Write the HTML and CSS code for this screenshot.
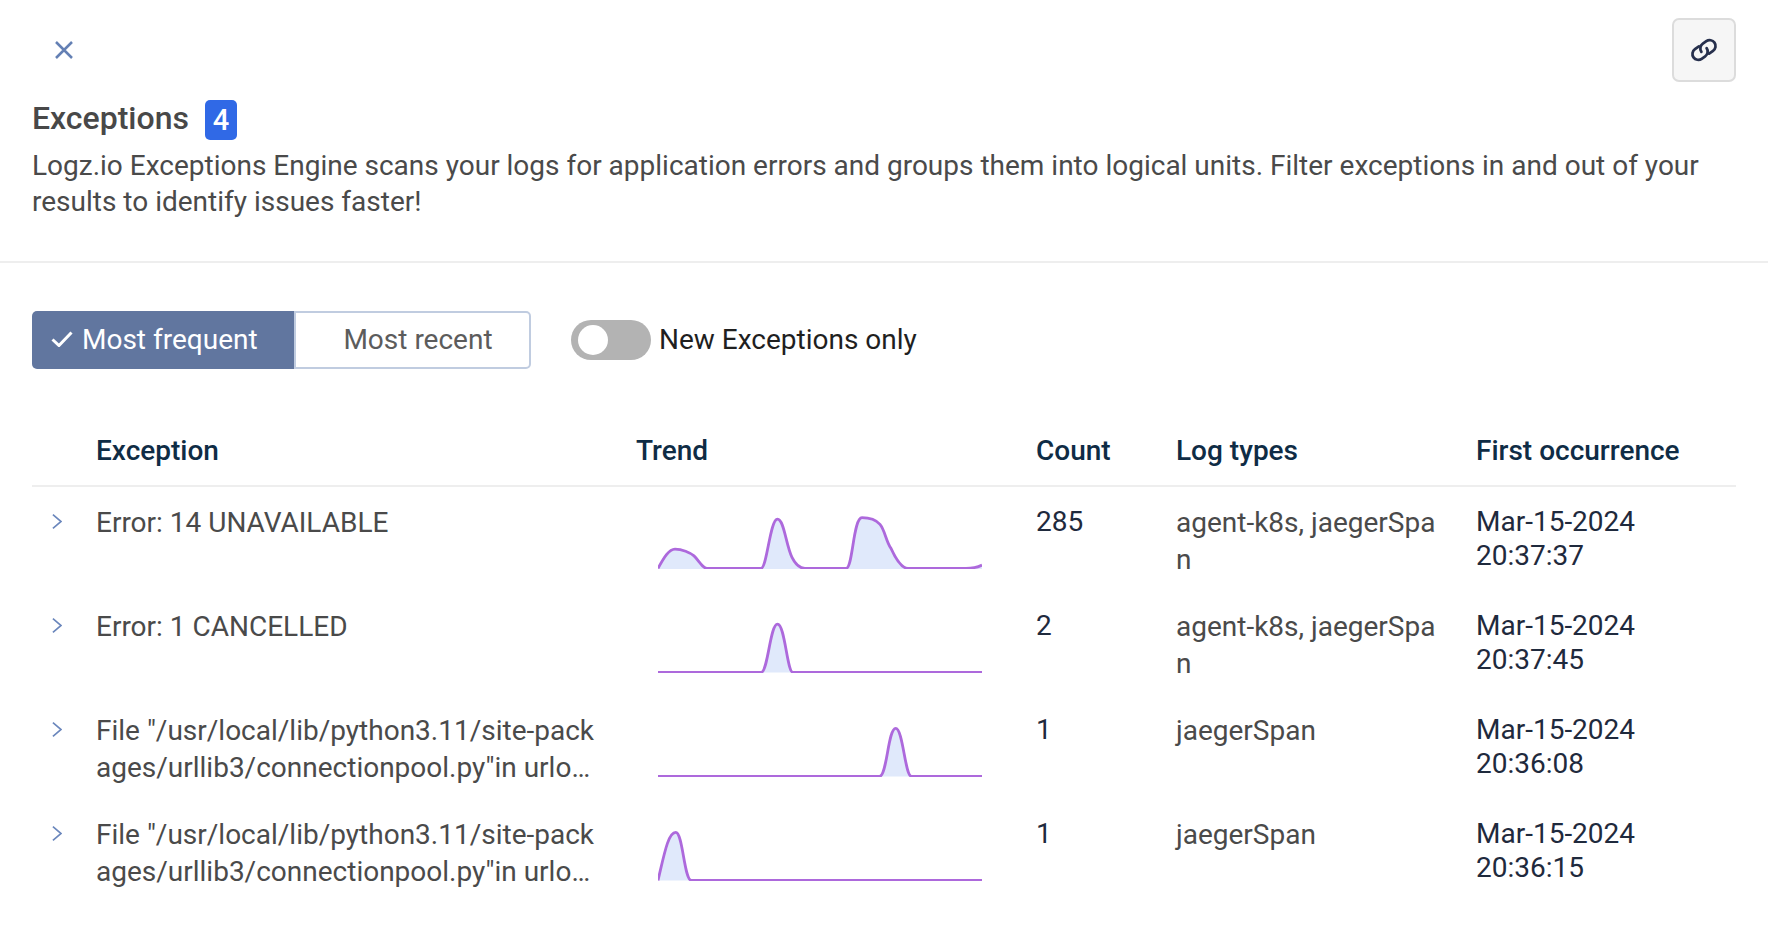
FILE: index.html
```html
<!DOCTYPE html>
<html lang="en">
<head>
<meta charset="utf-8">
<title>Exceptions</title>
<link rel="stylesheet" href="styles.css">
</head>
<body>
<header class="head">
  <div class="top">
    <button class="close" aria-label="Close">
      <svg width="18" height="18" viewBox="0 0 18 18"><path d="M1 1 17 17M17 1 1 17"/></svg>
    </button>
    <button class="link" aria-label="Copy link">
      <svg width="32" height="26" viewBox="0 0 30 24"><g transform="rotate(-35 15 12)"><path d="M13 6.500H8.500a5.500 5.500 0 0 0 0 11h4a5.500 5.500 0 0 0 5.500-5.500"/><path d="M17 17.500h4.500a5.500 5.500 0 0 0 0-11h-4a5.500 5.500 0 0 0-5.500 5.500"/></g></svg>
    </button>
  </div>
  <div class="title"><h1>Exceptions</h1><span class="badge">4</span></div>
  <p class="desc">Logz.io Exceptions Engine scans your logs for application errors and groups them into logical units. Filter exceptions in and out of your results to identify issues faster!</p>
</header>
<section class="controls">
  <div class="seg">
    <button class="seg-on"><svg width="22" height="16" viewBox="0 0 22 16"><path d="M1.500 8.500 8 14.500 20.500 1.500"/></svg>Most frequent</button>
    <button class="seg-off">Most recent</button>
  </div>
  <span class="toggle"><span class="knob"></span></span>
  <span class="toggle-label">New Exceptions only</span>
</section>
<section class="table">
  <div class="row row-head">
    <div></div><div>Exception</div><div>Trend</div><div>Count</div><div>Log types</div><div>First occurrence</div>
  </div>
  <div class="row">
    <div class="chev"><svg width="11" height="17" viewBox="0 0 11 17"><path d="M1 1 10 8.500 1 16"/></svg></div>
    <div class="exc">Error: 14 UNAVAILABLE</div>
    <div class="trend"><svg width="324" height="56" viewBox="0 0 324 56"><path class="fill" d="M0 55C6 44 11 35.700 17 35.700 24 35.700 32 39 36 42.500 41 47 44 55 49 55L103 55C109 55 112 5.700 119.500 5.700 126 5.700 128 32 134 44 138 52 142 55 147 55L188 55C195 55 195 4.300 204 4.300 211 4.300 218 6.500 222 11 227 17 228 28 233 35 238 46 244 55 250 55L308 55C315 55 319 54 324 51.700V56H0Z"/><path class="line" d="M0 55C6 44 11 35.700 17 35.700 24 35.700 32 39 36 42.500 41 47 44 55 49 55L103 55C109 55 112 5.700 119.500 5.700 126 5.700 128 32 134 44 138 52 142 55 147 55L188 55C195 55 195 4.300 204 4.300 211 4.300 218 6.500 222 11 227 17 228 28 233 35 238 46 244 55 250 55L308 55C315 55 319 54 324 51.700"/></svg></div>
    <div class="date">285</div>
    <div class="logs">agent-k8s, jaegerSpan</div>
    <div class="date">Mar-15-2024<br>20:37:37</div>
  </div>
  <div class="row">
    <div class="chev"><svg width="11" height="17" viewBox="0 0 11 17"><path d="M1 1 10 8.500 1 16"/></svg></div>
    <div class="exc">Error: 1 CANCELLED</div>
    <div class="trend"><svg width="324" height="56" viewBox="0 0 324 56"><path class="fill" d="M103 55C110 55 112 6.700 119.500 6.700 127 6.700 129 55 135 55Z"/><path class="line" d="M0 55H103C110 55 112 6.700 119.500 6.700 127 6.700 129 55 135 55H324"/></svg></div>
    <div class="date">2</div>
    <div class="logs">agent-k8s, jaegerSpan</div>
    <div class="date">Mar-15-2024<br>20:37:45</div>
  </div>
  <div class="row">
    <div class="chev"><svg width="11" height="17" viewBox="0 0 11 17"><path d="M1 1 10 8.500 1 16"/></svg></div>
    <div class="exc">File "/usr/local/lib/python3.11/site-packages/urllib3/connectionpool.py"in urlopen raise SSLError(e)</div>
    <div class="trend"><svg width="324" height="56" viewBox="0 0 324 56"><path class="fill" d="M221.500 55C229 55 230 7 237.700 7 245 7 247 55 253.500 55Z"/><path class="line" d="M0 55H221.500C229 55 230 7 237.700 7 245 7 247 55 253.500 55H324"/></svg></div>
    <div class="date">1</div>
    <div class="logs">jaegerSpan</div>
    <div class="date">Mar-15-2024<br>20:36:08</div>
  </div>
  <div class="row">
    <div class="chev"><svg width="11" height="17" viewBox="0 0 11 17"><path d="M1 1 10 8.500 1 16"/></svg></div>
    <div class="exc">File "/usr/local/lib/python3.11/site-packages/urllib3/connectionpool.py"in urlopen raise SSLError(e)</div>
    <div class="trend"><svg width="324" height="56" viewBox="0 0 324 56"><path class="fill" d="M0 55C6 30 10 7 17.700 7 25 7 26 55 33.500 55Z"/><path class="line" d="M0 55C6 30 10 7 17.700 7 25 7 26 55 33.500 55H324"/></svg></div>
    <div class="date">1</div>
    <div class="logs">jaegerSpan</div>
    <div class="date">Mar-15-2024<br>20:36:15</div>
  </div>
</section>
</body>
</html>
```
FILE: styles.css
```css
* { box-sizing: border-box; }
html, body { margin: 0; background: #fff; }
body { font-family: Roboto, "Liberation Sans", sans-serif; font-size: 28px; color: #4a4a4a; width: 1768px; height: 930px; overflow: hidden; }
button { font: inherit; cursor: pointer; }

.head { padding: 18px 32px 41px; border-bottom: 2px solid #eeeeee; }
.top { display: flex; justify-content: space-between; align-items: center; }
.close { background: none; border: 0; padding: 0; margin-left: 23px; display: flex; }
.close path { fill: none; stroke: #6480b4; stroke-width: 2.5; }
.link { width: 64px; height: 64px; background: #f6f6f6; border: 2px solid #dcdcdc; border-radius: 7px; display: flex; align-items: center; justify-content: center; padding: 0; }
.link path { fill: none; stroke: #27304d; stroke-width: 2.6; stroke-linecap: round; }

.title { display: flex; align-items: center; gap: 16px; margin-top: 18px; height: 40px; }
h1 { margin: 0 0 4px; font-size: 32px; font-weight: 500; color: #484848; }
.badge { width: 32px; height: 40px; background: #3069e6; color: #fff; border-radius: 5px; display: flex; align-items: center; justify-content: center; font-size: 29px; font-weight: 500; }
.desc { margin: 8px 0 0; line-height: 36px; }

.controls { display: flex; align-items: center; padding: 48px 32px 0; }
.seg { display: flex; height: 58px; }
.seg button { height: 58px; display: flex; align-items: center; padding-bottom: 2px; }
.seg-on { width: 262px; background: #61769f; color: #fff; border: 0; border-radius: 5px 0 0 5px; padding: 0 0 0 19px; gap: 9px; }
.seg-on path { fill: none; stroke: #fff; stroke-width: 3; }
.seg-off { width: 237px; background: #fff; color: #5c5c5c; border: 2px solid #c0cce0; border-radius: 0 5px 5px 0; justify-content: center; padding: 0 0 0 11px; }
.toggle { width: 80px; height: 40px; margin-left: 40px; border-radius: 20px; background: #b3b3b3; position: relative; }
.knob { position: absolute; left: 7px; top: 5px; width: 30px; height: 30px; border-radius: 50%; background: #fff; }
.toggle-label { margin-left: 8px; color: #1f1f1f; padding-bottom: 2px; }

.table { margin: 48px 32px 0; }
.row { display: grid; grid-template-columns: 64px 540px 400px 140px 300px 260px; height: 104px; padding-top: 17px; line-height: 37px; }
.row-head { height: 70px; padding-top: 15px; border-bottom: 2px solid #eeeeee; color: #0f2c45; font-weight: 500; }
.chev { padding: 9px 0 0 20px; line-height: 0; height: 37px; }
.chev svg { display: block; width: 10px; }
.chev path { fill: none; stroke: #6a86bc; stroke-width: 1.8; }
.exc { width: 505px; word-break: break-all; display: -webkit-box; -webkit-box-orient: vertical; -webkit-line-clamp: 2; overflow: hidden; height: 74px; }
.trend { padding: 9px 0 0 22px; }
.trend svg { display: block; }
.trend path { transform: translateY(0.4px); }
.trend .fill { fill: #e0e9fb; }
.trend .line { fill: none; stroke: #ad69dc; stroke-width: 2.8; }
.date { color: #1f2a3d; line-height: 34px; padding-top: 1px; }
.logs { width: 265px; word-break: break-all; }
```
